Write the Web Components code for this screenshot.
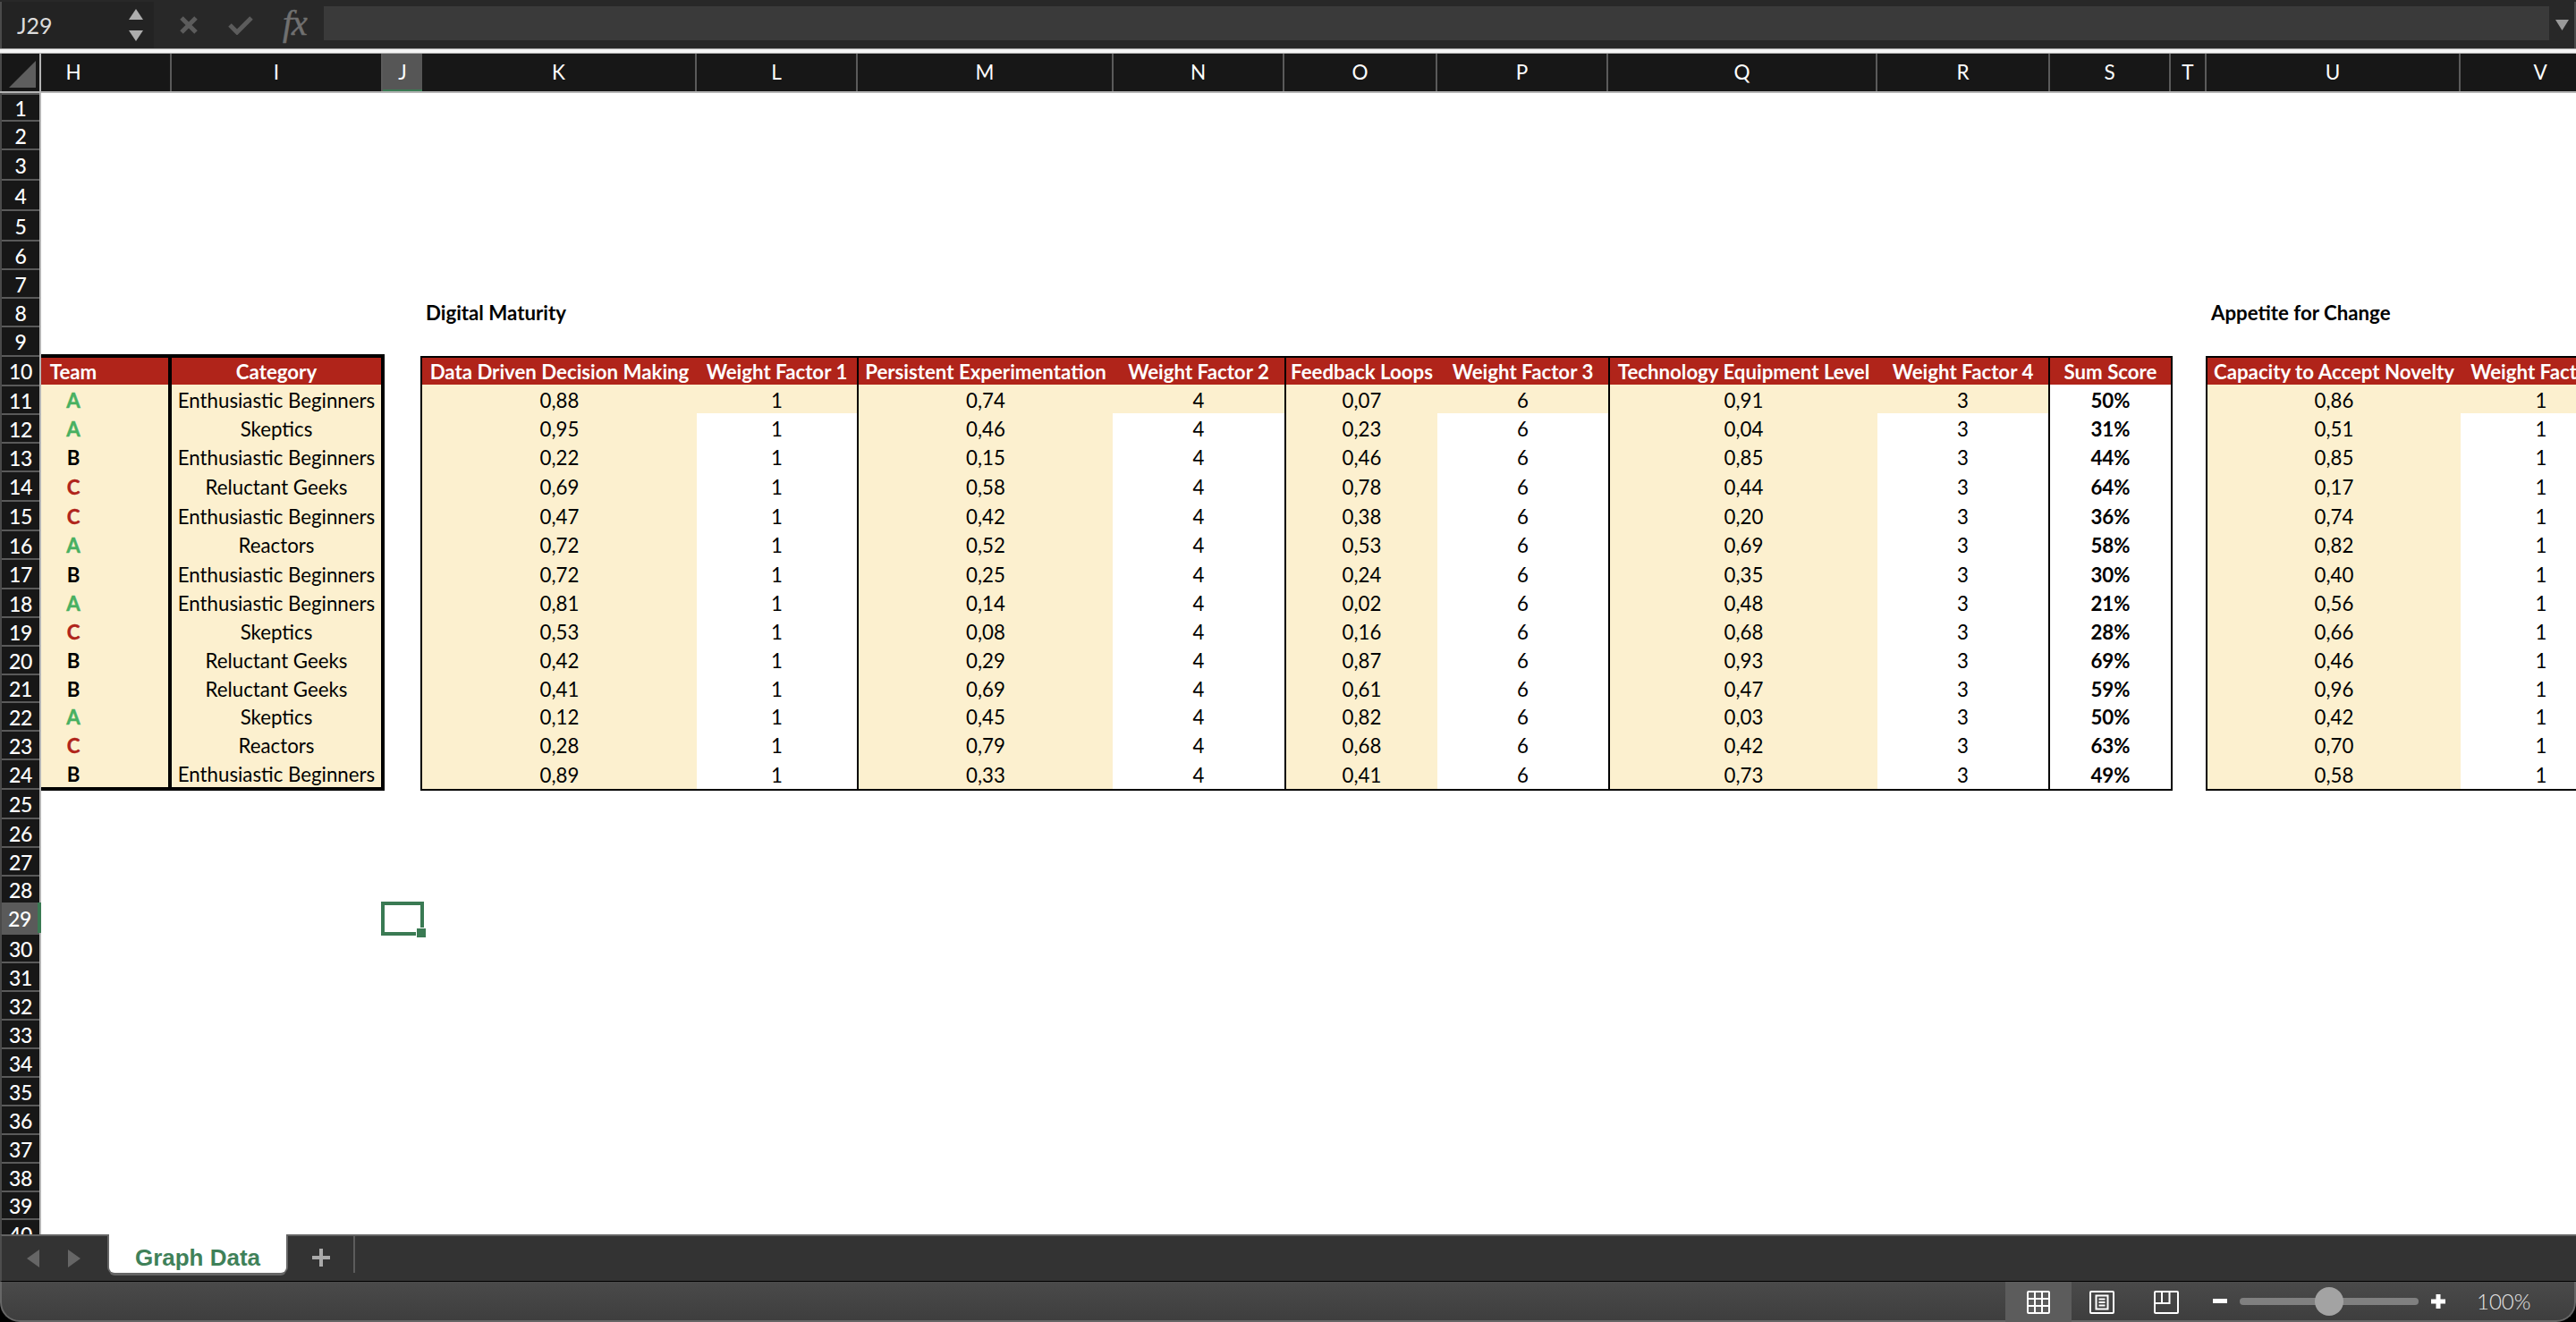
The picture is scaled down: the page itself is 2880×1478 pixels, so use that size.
<!doctype html>
<html>
<head>
<meta charset="utf-8">
<title>Graph Data</title>
<style>
  html, body { margin: 0; height: 100%; background: #000; overflow: hidden; }
  xl-app { font-family: Lato, "Liberation Sans", sans-serif; }
</style>
</head>
<body>
<xl-app>
  <xl-formula-bar>J29</xl-formula-bar>
  <xl-column-headers></xl-column-headers>
  <div style="display:flex; height:1276px; overflow:hidden; background:#fff;">
    <xl-row-headers></xl-row-headers>
    <xl-sheet></xl-sheet>
  </div>
  <xl-sheet-tabs><xl-sheet-tab>Graph Data</xl-sheet-tab></xl-sheet-tabs>
  <xl-status-bar>100%</xl-status-bar>
</xl-app>

<script>
/* ---- data ---- */
const ROWS = [
  ["A","Enthusiastic Beginners","0,88","0,74","0,07","0,91","50%","0,86"],
  ["A","Skeptics","0,95","0,46","0,23","0,04","31%","0,51"],
  ["B","Enthusiastic Beginners","0,22","0,15","0,46","0,85","44%","0,85"],
  ["C","Reluctant Geeks","0,69","0,58","0,78","0,44","64%","0,17"],
  ["C","Enthusiastic Beginners","0,47","0,42","0,38","0,20","36%","0,74"],
  ["A","Reactors","0,72","0,52","0,53","0,69","58%","0,82"],
  ["B","Enthusiastic Beginners","0,72","0,25","0,24","0,35","30%","0,40"],
  ["A","Enthusiastic Beginners","0,81","0,14","0,02","0,48","21%","0,56"],
  ["C","Skeptics","0,53","0,08","0,16","0,68","28%","0,66"],
  ["B","Reluctant Geeks","0,42","0,29","0,87","0,93","69%","0,46"],
  ["B","Reluctant Geeks","0,41","0,69","0,61","0,47","59%","0,96"],
  ["A","Skeptics","0,12","0,45","0,82","0,03","50%","0,42"],
  ["C","Reactors","0,28","0,79","0,68","0,42","63%","0,70"],
  ["B","Enthusiastic Beginners","0,89","0,33","0,41","0,73","49%","0,58"]
];

// top edge of rows 1..40, real sheets are not evenly spaced
const ROW_TOPS = [104,134,166,200,234,268,300,332,364,397,430,462,494,526,559,592,624,657,689,721,
                  753,784,816,848,881,914,946,978,1009,1043,1075,1107,1139,1171,1203,1235,1267,1299,1331,1362,1394];

const COLUMNS = [["H",146],["I",236],["J",44],["K",307],["L",180],["M",286],["N",191],["O",171],
                 ["P",191],["Q",301],["R",193],["S",135],["T",40],["U",284],["V",180]];

// column edges of the cell grid (borders sit inside these)
const SHEET_EDGES = [46,192,430,470,779,958,1244,1436,1607,1798,2099,2290,2429,2466,2751,2931];

function shadow(el, html) {
  el.attachShadow({ mode: "open" }).innerHTML = html;
}

/* ---- app shell ---- */
class XlApp extends HTMLElement {
  connectedCallback() {
    shadow(this, `<style>
      :host { display:flex; flex-direction:column; width:2880px; height:1478px; background:#000; overflow:hidden; }
    </style><slot></slot>`);
  }
}

/* ---- formula bar ---- */
class XlFormulaBar extends HTMLElement {
  connectedCallback() {
    shadow(this, `<style>
      :host { display:flex; height:60px; box-sizing:border-box; padding-top:2px; background:#282828; flex:none; position:relative; }
      .wrap { display:flex; flex:1; height:52px; align-items:center; border-left:2px solid #4a4a4a; border-right:2px solid #4a4a4a; }
      .name { width:170px; height:100%; box-sizing:border-box; background:#232323; display:flex; align-items:center; padding-left:17px;
              color:#dcdcdc; font-size:25px; position:relative; flex:none; justify-content:space-between; padding-right:12px; }
      .spin { display:flex; flex-direction:column; gap:12px; margin-top:-1px; }
      .tools { display:flex; align-items:center; width:190px; flex:none; }
      .x { margin-left:29px; } .ok { margin-left:34px; }
      .fx { margin-left:33px; color:#707070; font:italic 40px "Liberation Serif", serif; margin-top:-5px; letter-spacing:-1px; -webkit-text-stroke:.5px #707070; }
      .input { flex:1; height:38px; margin-top:-4px; background:#3a3a3a; }
      .drop { width:28px; flex:none; display:flex; justify-content:center; margin-top:-1px; }
      .line { position:absolute; left:0; right:0; bottom:0; height:6px; box-sizing:border-box; background:#f4f4f4; border-top:1px solid #9a9a9a; border-bottom:1px solid #b5b5b5; }
    </style>
    <div class="wrap">
      <div class="name"><slot></slot>
        <div class="spin">
          <svg width="16" height="12" viewBox="0 0 16 12"><path d="M8 0L16 12H0Z" fill="#adadad"/></svg>
          <svg width="16" height="12" viewBox="0 0 16 12"><path d="M0 0H16L8 12Z" fill="#adadad"/></svg>
        </div>
      </div>
      <div class="tools">
        <svg class="x" width="20" height="20" viewBox="0 0 20 20"><path d="M2 2L18 18M18 2L2 18" stroke="#5c5c5c" stroke-width="5"/></svg>
        <svg class="ok" width="28" height="22" viewBox="0 0 28 22"><path d="M2 11L10 19L26 3" fill="none" stroke="#5c5c5c" stroke-width="5"/></svg>
        <span class="fx">fx</span>
      </div>
      <div class="input"></div>
      <div class="drop"><svg width="15" height="12" viewBox="0 0 15 12"><path d="M0 0H15L7.5 12Z" fill="#9a9a9a"/></svg></div>
    </div>
    <div class="line"></div>`);
  }
}

/* ---- headers ---- */
class XlColumnHeaders extends HTMLElement {
  connectedCallback() {
    const cols = COLUMNS.map(([name, w]) => {
      const cls = name === "J" ? "col on" : name === "H" ? "col first" : "col";
      return `<div class="${cls}" style="width:${w}px">${name}</div>`;
    }).join("");
    shadow(this, `<style>
      :host { display:flex; height:44px; flex:none; background:#171717; box-sizing:border-box; border-bottom:2px solid #b4b4b4; overflow:hidden; color:#fff; font-size:22.5px; }
      .corner { width:46px; flex:none; box-sizing:border-box; border-left:2px solid #4a4a4a; border-right:2px solid #b4b4b4; display:flex; align-items:flex-end; }
      .col { flex:none; box-sizing:border-box; text-align:center; line-height:42px; border-right:2px solid #5a5a5a; }
      .col.first { padding-right:72px; }
      .col.on { background:#565656; border-right:0; border-bottom:4px solid #3a7a53; height:44px; position:relative; }
    </style>
    <div class="corner"><svg width="32" height="30" viewBox="0 0 32 30" style="margin:0 0 4px 8px"><path d="M30 0V30H0Z" fill="#5e5e5e"/></svg></div>
    ${cols}`);
  }
}

class XlRowHeaders extends HTMLElement {
  connectedCallback() {
    let rows = "";
    for (let i = 0; i < 40; i++) {
      const h = ROW_TOPS[i + 1] - ROW_TOPS[i];
      rows += `<div class="row${i === 28 ? " on" : ""}" style="height:${h}px">${i + 1}</div>`;
    }
    shadow(this, `<style>
      :host { display:block; width:46px; flex:none; box-sizing:border-box; background:#171717; border-left:2px solid #4a4a4a; border-right:2px solid #b4b4b4; color:#fff; font-size:23px; font-weight:500; letter-spacing:-.3px; }
      .row { box-sizing:border-box; border-top:2px solid #5a5a5a; text-align:center; display:flex; align-items:center; justify-content:center; position:relative; padding-top:1px; }
      .row:first-child { border-top:0; }
      .on { background:#5a5a5a; margin-right:-2px; border-right:4px solid #3a7a53; border-top:0; }
    </style>${rows}`);
  }
}

/* ---- the cells ---- */
const CELL_STYLE = `
  .c { box-sizing:border-box; display:flex; align-items:center; justify-content:center; padding-top:3px; white-space:nowrap; overflow:hidden; min-width:0; color:#000; }
  .cream { background:#fcf0cf; }
  .head { background:#b0241a; color:#fff; font-weight:700; padding-top:0; }
  .b { font-weight:700; }
  .lb { border-left:2px solid #000; }
  .rb { border-right:2px solid #000; }
  .tb { border-top:2px solid #000; margin-top:2px; }
  .bb { border-bottom:2px solid #000; }
  .team { padding-right:70px; }
  .thick-r { border-right:4px solid #000; }
  .thick-t { border-top:4px solid #000; }
  .thick-b { border-bottom:4px solid #000; }
  .A { color:#48b061; -webkit-text-stroke:.4px #48b061; } .C { color:#b0241a; -webkit-text-stroke:.4px #b0241a; }
  .title { justify-content:flex-start; font-weight:700; padding:3px 0 0 6px; overflow:visible; }
  .sel { position:absolute; left:380px; top:904px; width:48px; height:38px; box-sizing:border-box; border:4px solid #3a7a53; }
  .sel::after { content:""; position:absolute; right:-6px; bottom:-6px; width:10px; height:10px; background:#3a7a53; outline:1px solid #fff; }
`;

class XlSheet extends HTMLElement {
  connectedCallback() {
    const colTracks = SHEET_EDGES.slice(1).map((e, i) => (e - SHEET_EDGES[i]) + "px").join(" ");
    const tops = ROW_TOPS.slice(0, 26).map((t, i) => i === 9 ? 396 : i === 24 ? 884 : t);
    const rowTracks = tops.slice(1).map((t, i) => (t - tops[i]) + "px").join(" ");

    const cell = (col, row, text, cls) => `<div class="c ${cls}" style="grid-column:${col};grid-row:${row}">${text}</div>`;
    let html = "";

    html += cell(4, 8, "Digital Maturity", "title");
    html += cell(14, 8, "Appetite for Change", "title");

    // header row
    html += cell(1, 10, "Team", "head team thick-t thick-r");
    html += cell(2, 10, "Category", "head thick-t thick-r");
    const heads = [
      [4,"Data Driven Decision Making","lb"],[5,"Weight Factor 1",""],
      [6,"Persistent Experimentation","lb"],[7,"Weight Factor 2",""],
      [8,"Feedback Loops","lb"],[9,"Weight Factor 3",""],
      [10,"Technology Equipment Level","lb"],[11,"Weight Factor 4",""],
      [12,"Sum Score","lb rb"],[14,"Capacity to Accept Novelty","lb"],[15,"Weight Factor 1",""]
    ];
    for (const [col, text, cls] of heads) html += cell(col, 10, text, "head tb " + cls);

    // data rows
    ROWS.forEach((r, i) => {
      const row = 11 + i;
      const last = i === ROWS.length - 1;
      const bot = last ? " bb" : "";
      const fillWeight = i === 0 ? "cream" : "";
      html += cell(1, row, r[0], `cream team b thick-r ${r[0]} ${last ? "thick-b" : ""}`);
      html += cell(2, row, r[1], `cream thick-r ${last ? "thick-b" : ""}`);
      [[4,5,1],[6,7,4],[8,9,6],[10,11,3]].forEach(([vc, wc, w], k) => {
        html += cell(vc, row, r[2 + k], "cream lb" + bot);
        html += cell(wc, row, w, fillWeight + bot);
      });
      html += cell(12, row, r[6], "b lb rb" + bot);
      html += cell(14, row, r[7], "cream lb" + bot);
      html += cell(15, row, 1, fillWeight + bot);
    });

    shadow(this, `<style>
      :host { display:block; flex:1; min-width:0; position:relative; overflow:hidden; background:#fff; font-size:22.25px; }
      .grid { display:grid; grid-template-columns:${colTracks}; grid-template-rows:${rowTracks}; }
      ${CELL_STYLE}
    </style>
    <div class="grid">${html}</div>
    <div class="sel"></div>`);
  }
}

/* ---- sheet tabs ---- */
class XlSheetTab extends HTMLElement {
  connectedCallback() {
    shadow(this, `<style>
      :host { display:flex; width:198px; height:43px; align-items:center; justify-content:center; flex:none; box-sizing:border-box; background:#fff; color:#3f8159;
              font:700 26px "Liberation Sans", sans-serif; border-radius:0 0 6px 6px; box-shadow:0 3px 0 #666, -2px 0 0 #666, 2px 0 0 #666; margin-top:-2px; position:relative; padding-top:10px; }
    </style><slot></slot>`);
  }
}

class XlSheetTabs extends HTMLElement {
  connectedCallback() {
    shadow(this, `<style>
      :host { display:flex; align-items:flex-start; height:53px; flex:none; box-sizing:border-box; background:#333; border-top:2px solid #636363; border-left:2px solid #4d4d4d; border-bottom:1px solid #000; }
      .nav { width:120px; flex:none; height:50px; display:flex; align-items:center; padding-left:28px; box-sizing:border-box; gap:32px; }
      .plus { width:76px; height:41px; box-sizing:border-box; border-right:2px solid #5c5c5c; display:flex; align-items:center; justify-content:center; margin-left:1px; flex:none; padding-left:2px; padding-top:7px; }
    </style>
    <div class="nav">
      <svg width="14" height="20" viewBox="0 0 14 20"><path d="M14 0V20L0 10Z" fill="#666"/></svg>
      <svg width="14" height="20" viewBox="0 0 14 20"><path d="M0 0V20L14 10Z" fill="#666"/></svg>
    </div>
    <slot></slot>
    <div class="plus"><svg width="20" height="20" viewBox="0 0 20 20"><path d="M10 0V20M0 10H20" stroke="#aaa" stroke-width="4"/></svg></div>`);
  }
}

/* ---- status bar ---- */
class XlStatusBar extends HTMLElement {
  connectedCallback() {
    shadow(this, `<style>
      :host { display:flex; justify-content:flex-end; height:45px; flex:none; box-sizing:border-box; background:linear-gradient(#4a4a4a,#3e3e3e);
              border:2px solid #666; border-top:0; border-radius:0 0 22px 22px; color:#e4e4e4; font-size:24px; font-weight:300; }
      .view { display:flex; width:72px; height:45px; align-items:center; justify-content:center; flex:none; box-sizing:border-box; }
      .view.on { width:74px; background:#5c5c5c; margin-right:-2px; }
      .zoom { display:flex; align-items:center; height:100%; box-sizing:border-box; }
      .track { width:200px; height:8px; border-radius:4px; background:#808080; margin:0 14px; position:relative; }
      .thumb { position:absolute; left:84px; top:-12px; width:32px; height:32px; border-radius:50%; background:#a3a3a3; }
      .pct { width:144px; text-align:left; padding-left:35px; box-sizing:border-box; }
    </style>
    <div class="view on"><svg width="26" height="26" viewBox="0 0 26 26" fill="none" stroke="#fff" stroke-width="2"><rect x="1" y="1" width="24" height="24" rx="1"/><path d="M9 1V25M17 1V25M1 9H25M1 17H25"/></svg></div>
    <div class="view"><svg width="28" height="26" viewBox="0 0 28 26" fill="none" stroke="#fff" stroke-width="2"><rect x="1" y="1" width="26" height="24" rx="1"/><rect x="7.5" y="5.5" width="13" height="15"/><path d="M10.5 9.5H17.5M10.5 13H17.5M10.5 16.5H17.5"/></svg></div>
    <div class="view"><svg width="28" height="26" viewBox="0 0 28 26" fill="none" stroke="#fff" stroke-width="2"><rect x="1" y="1" width="26" height="24" rx="1"/><path d="M1 14H17.5V1M9 1V14"/></svg></div>
    <div class="zoom">
      <svg width="16" height="5" viewBox="0 0 16 5" style="margin-left:16px"><rect width="16" height="5" fill="#fff"/></svg>
      <div class="track"><div class="thumb"></div></div>
      <svg width="16" height="16" viewBox="0 0 16 16"><path d="M8 0V16M0 8H16" stroke="#fff" stroke-width="5"/></svg>
      <div class="pct"><slot></slot></div>
    </div>`);
  }
}

customElements.define("xl-app", XlApp);
customElements.define("xl-formula-bar", XlFormulaBar);
customElements.define("xl-column-headers", XlColumnHeaders);
customElements.define("xl-row-headers", XlRowHeaders);
customElements.define("xl-sheet", XlSheet);
customElements.define("xl-sheet-tab", XlSheetTab);
customElements.define("xl-sheet-tabs", XlSheetTabs);
customElements.define("xl-status-bar", XlStatusBar);
</script>
</body>
</html>
